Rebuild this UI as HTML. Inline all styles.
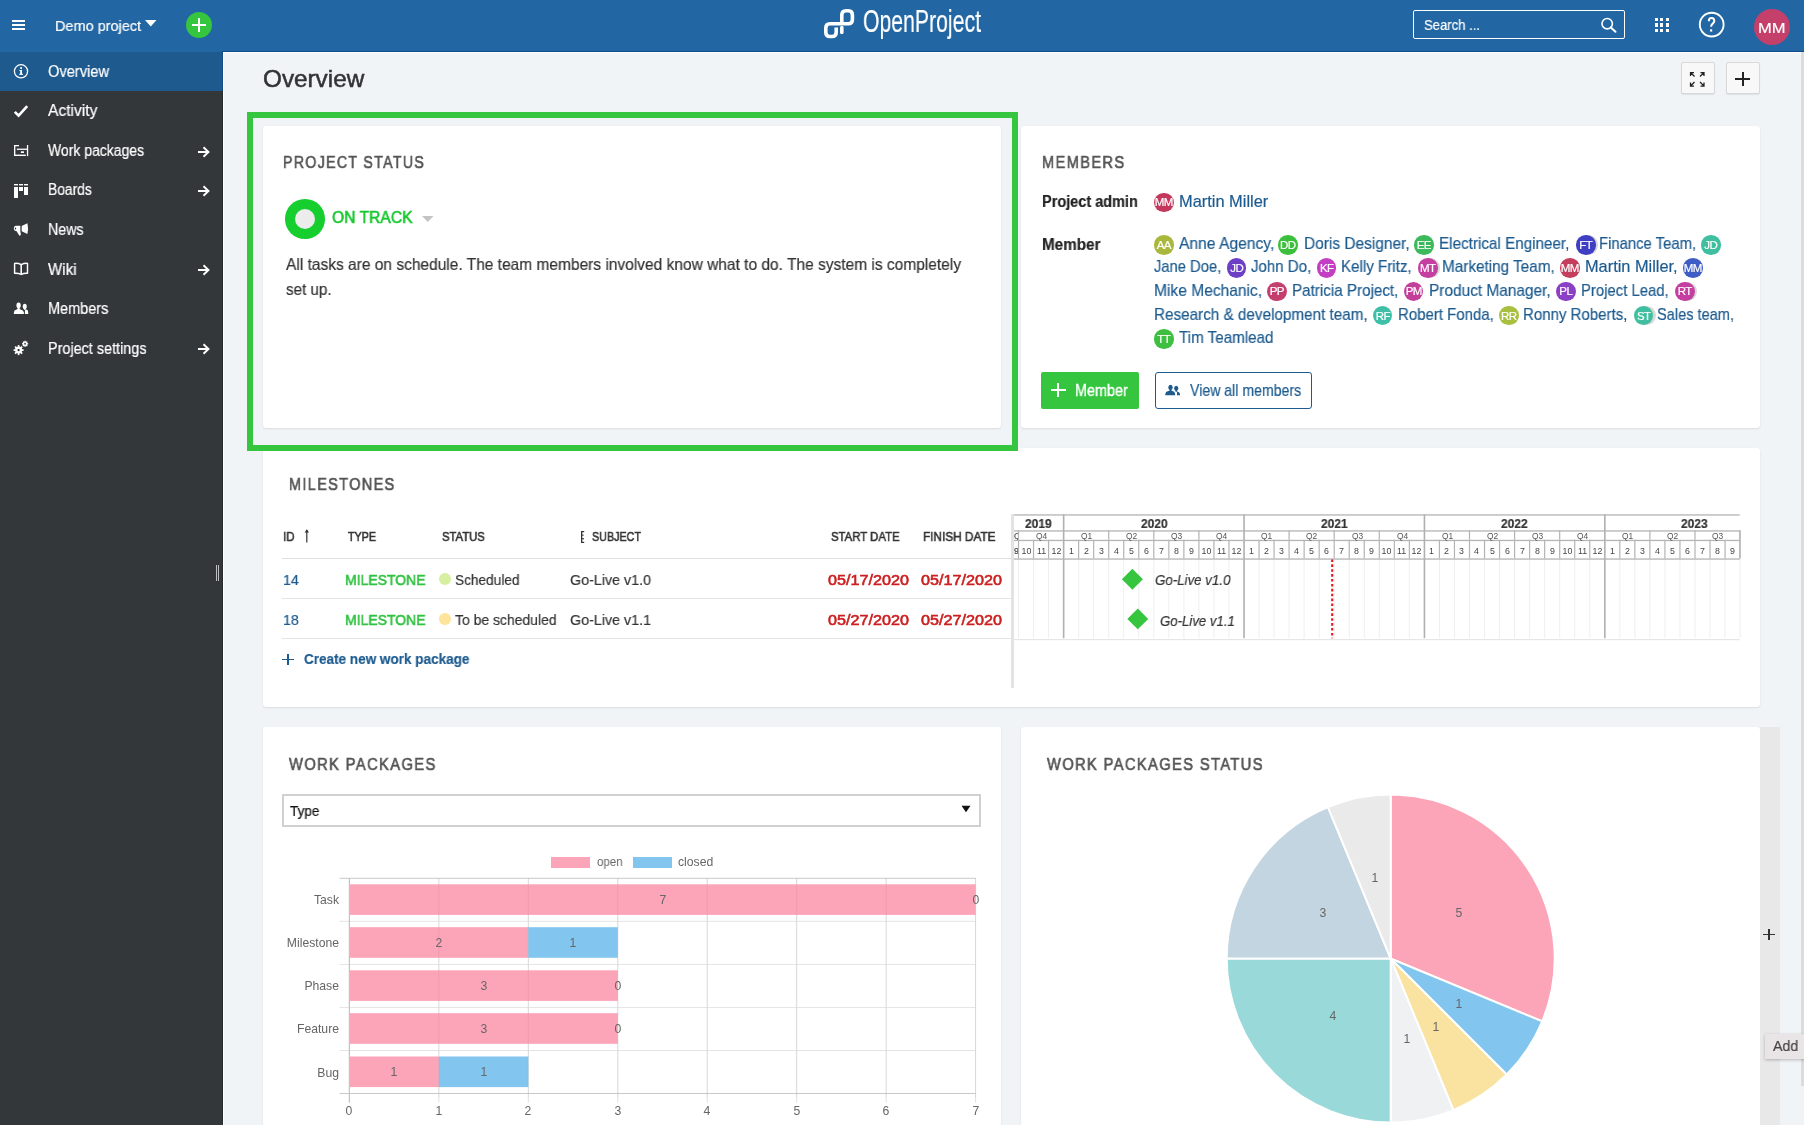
<!DOCTYPE html>
<html><head><meta charset="utf-8"><title>Overview</title>
<style>
*{box-sizing:border-box;margin:0;padding:0}
html,body{width:1804px;height:1125px;overflow:hidden;background:#f1f4f7;font-family:"Liberation Sans",sans-serif;color:#333}
.a{position:absolute}
.t{position:absolute;white-space:nowrap;line-height:1;transform-origin:0 50%;-webkit-text-stroke:0.2px currentColor}
.semi{-webkit-text-stroke:0.6px currentColor}
.t{will-change:transform}
.card{position:absolute;background:#fff;border-radius:3px;box-shadow:0 1px 2px rgba(0,0,0,.09),0 0 1px rgba(0,0,0,.06)}
svg{position:absolute;overflow:visible}
</style></head><body>

<div class="a" style="left:0px;top:0px;width:1804px;height:52px;background:#2267a3;"></div>
<div class="a" style="left:222px;top:51px;width:1582px;height:1px;background:#0f4c88;"></div>
<div class="a" style="left:12px;top:20px;width:12.5px;height:2px;background:#fff"></div>
<div class="a" style="left:12px;top:24px;width:12.5px;height:2px;background:#fff"></div>
<div class="a" style="left:12px;top:28px;width:12.5px;height:2px;background:#fff"></div>
<div class="t " style="left: 55.2px; top: 17.8px; font-size: 15px; color: rgb(255, 255, 255); transform: scaleX(0.9652);">Demo project</div>
<svg style="left:145px;top:20px" width="12" height="7"><path d="M0 0H11.5L5.75 6.5Z" fill="#fff"></path></svg>
<div class="a" style="left:186.00px;top:11.50px;width:26px;height:26px;border-radius:50%;background:#35c53f;"></div>
<div class="a" style="left:192px;top:23.5px;width:14px;height:2px;background:#fff;"></div>
<div class="a" style="left:198px;top:17.5px;width:2px;height:14px;background:#fff;"></div>
<svg style="left:818px;top:4px" width="44" height="40"><g fill="none" stroke="#fff" stroke-width="3.6"><path d="M23.8 21V11Q23.8 6.8 28 6.8H30.3Q34.4 6.8 34.4 11V15.8Q34.4 19.8 30.3 19.8H12Q7.8 19.8 7.8 24V28.2Q7.8 32.5 12 32.5H14Q18.2 32.5 18.2 28.2V23.4"></path><path d="M23.8 23.5V28.5" stroke-linecap="round"></path></g></svg>
<div class="t " style="left: 863px; top: 6.16px; font-size: 31px; color: rgb(255, 255, 255); transform: scaleX(0.6847);">OpenProject</div>
<div class="a" style="left:1412.5px;top:10px;width:212.5px;height:29px;border:1.4px solid #fff;border-radius:2px"></div>
<div class="t " style="left: 1424px; top: 16.88px; font-size: 15.5px; color: rgb(255, 255, 255); transform: scaleX(0.8441);">Search ...</div>
<svg style="left:1598px;top:15px" width="22" height="20"><circle cx="9.2" cy="8.7" r="5.2" fill="none" stroke="#fff" stroke-width="1.6"></circle><path d="M12.8 12.4L17.5 16.8" stroke="#fff" stroke-width="2" stroke-linecap="round"></path></svg>
<div class="a" style="left:1654.9px;top:18.0px;width:3.3px;height:3.3px;background:#fff;"></div>
<div class="a" style="left:1654.9px;top:23.3px;width:3.3px;height:3.3px;background:#fff;"></div>
<div class="a" style="left:1654.9px;top:28.6px;width:3.3px;height:3.3px;background:#fff;"></div>
<div class="a" style="left:1660.2px;top:18.0px;width:3.3px;height:3.3px;background:#fff;"></div>
<div class="a" style="left:1660.2px;top:23.3px;width:3.3px;height:3.3px;background:#fff;"></div>
<div class="a" style="left:1660.2px;top:28.6px;width:3.3px;height:3.3px;background:#fff;"></div>
<div class="a" style="left:1665.5px;top:18.0px;width:3.3px;height:3.3px;background:#fff;"></div>
<div class="a" style="left:1665.5px;top:23.3px;width:3.3px;height:3.3px;background:#fff;"></div>
<div class="a" style="left:1665.5px;top:28.6px;width:3.3px;height:3.3px;background:#fff;"></div>
<svg style="left:1698px;top:11px" width="28" height="28"><circle cx="13.7" cy="13.6" r="11.9" fill="none" stroke="#fff" stroke-width="1.9"></circle></svg>
<svg style="left:1698px;top:11px" width="28" height="28"><path d="M10.8 10.2Q10.8 6.9 13.6 6.9Q16.3 6.9 16.3 9.8Q16.3 11.4 14.7 12.6Q13.15 13.8 13.15 15.4V15.8" fill="none" stroke="#fff" stroke-width="2"></path><rect x="12.1" y="18.3" width="2.1" height="2.3" fill="#fff"></rect></svg>
<div class="a" style="left:1753.70px;top:8.80px;width:36px;height:36px;border-radius:50%;background:#c4406a;"></div>
<div class="t " style="left: 1758px; top: 19.76px; font-size: 15.4px; color: rgb(255, 255, 255); transform: scaleX(1.0719);">MM</div>
<div class="a" style="left:0px;top:52px;width:223px;height:1073px;background:#333739;"></div>
<div class="a" style="left:222px;top:52px;width:1px;height:1073px;background:#292c2e;"></div>
<div class="a" style="left:0px;top:52px;width:223px;height:39px;background:#1e5a8e;"></div>
<div class="a" style="left:222px;top:52px;width:1px;height:39px;background:#0f4c88;"></div>
<div class="t " style="left: 48.3px; top: 63.76px; font-size: 16px; color: rgb(255, 255, 255); transform: scaleX(0.9147);">Overview</div>
<div class="t " style="left: 48.3px; top: 103.26px; font-size: 16px; color: rgb(255, 255, 255); transform: scaleX(0.9729);">Activity</div>
<div class="t " style="left: 48.3px; top: 142.86px; font-size: 16px; color: rgb(255, 255, 255); transform: scaleX(0.8738);">Work packages</div>
<div class="t " style="left: 48.3px; top: 182.46px; font-size: 16px; color: rgb(255, 255, 255); transform: scaleX(0.8639);">Boards</div>
<div class="t " style="left: 48.3px; top: 221.96px; font-size: 16px; color: rgb(255, 255, 255); transform: scaleX(0.8872);">News</div>
<div class="t " style="left: 48.3px; top: 261.56px; font-size: 16px; color: rgb(255, 255, 255); transform: scaleX(0.9431);">Wiki</div>
<div class="t " style="left: 48.3px; top: 301.16px; font-size: 16px; color: rgb(255, 255, 255); transform: scaleX(0.9042);">Members</div>
<div class="t " style="left: 48.3px; top: 340.66px; font-size: 16px; color: rgb(255, 255, 255); transform: scaleX(0.9004);">Project settings</div>
<svg style="left:197px;top:145.8px" width="14" height="12"><path d="M1 6H11.5M6.5 1.2L11.5 6L6.5 10.8" fill="none" stroke="#fff" stroke-width="1.9"></path></svg>
<svg style="left:197px;top:184.9px" width="14" height="12"><path d="M1 6H11.5M6.5 1.2L11.5 6L6.5 10.8" fill="none" stroke="#fff" stroke-width="1.9"></path></svg>
<svg style="left:197px;top:263.8px" width="14" height="12"><path d="M1 6H11.5M6.5 1.2L11.5 6L6.5 10.8" fill="none" stroke="#fff" stroke-width="1.9"></path></svg>
<svg style="left:197px;top:342.8px" width="14" height="12"><path d="M1 6H11.5M6.5 1.2L11.5 6L6.5 10.8" fill="none" stroke="#fff" stroke-width="1.9"></path></svg>
<svg style="left:13px;top:63px" width="17" height="17"><circle cx="8" cy="8.3" r="6.6" fill="none" stroke="#fff" stroke-width="1.3"></circle><rect x="7.2" y="7" width="1.8" height="4.6" fill="#fff"></rect><rect x="6.2" y="10.8" width="3.8" height="1" fill="#fff"></rect><rect x="6.4" y="7" width="2" height="1" fill="#fff"></rect><circle cx="8.1" cy="5.1" r="1.05" fill="#fff"></circle></svg>
<svg style="left:13px;top:103px" width="17" height="17"><path d="M1.8 8.8L5.6 12.6L14.2 3.2" fill="none" stroke="#fff" stroke-width="2.6" stroke-linejoin="miter"></path></svg>
<svg style="left:13px;top:144px" width="17" height="14"><g fill="#fff"><rect x="1" y="1" width="1.35" height="11"></rect><rect x="1" y="1" width="5" height="1.3"></rect><rect x="1" y="10.6" width="11.8" height="1.4"></rect><rect x="13.9" y="1" width="1.3" height="11.1"></rect><rect x="3.8" y="4.6" width="10.3" height="1.3"></rect><rect x="7.8" y="7.2" width="3.2" height="1.8" rx="0.6"></rect></g></svg>
<svg style="left:13px;top:183px" width="17" height="17"><g fill="#fff"><rect x="1" y="1" width="4" height="1.4"></rect><rect x="6" y="1" width="4" height="1.4"></rect><rect x="11" y="1" width="4" height="1.4"></rect><rect x="1" y="4" width="4" height="11"></rect><rect x="6" y="4" width="4" height="4"></rect><rect x="11" y="4" width="4" height="8"></rect></g></svg>
<svg style="left:13px;top:222px" width="17" height="16"><g fill="#fff"><path d="M8.7 4L14.4 1.3Q15.7 6.65 14.4 12L8.7 9.3Z"></path><path d="M2.6 3.8H7.3V8.9H2.6Q0.9 8.9 0.9 6.35Q0.9 3.8 2.6 3.8Z"></path><path d="M3.4 8.9H7.3L7.9 12.5Q7.6 13.9 6.3 13.6Z"></path></g><ellipse cx="2.5" cy="6.6" rx="0.65" ry="1" fill="#333739"></ellipse></svg>
<svg style="left:13px;top:261px" width="17" height="16"><path d="M1.6 2.4Q5.2 2.1 8.2 3.6Q11.2 2.1 14.5 2.4V12.3Q11.2 12 8.2 13.4Q5.2 12 1.6 12.3Z" fill="none" stroke="#fff" stroke-width="1.45" stroke-linejoin="round"></path><path d="M8.2 3.6V13.6" stroke="#fff" stroke-width="1.6"></path></svg>
<svg style="left:13px;top:301px" width="17" height="15"><g fill="#fff"><ellipse cx="5.6" cy="4.4" rx="2.15" ry="2.8"></ellipse><rect x="4.6" y="6.4" width="2" height="2.2"></rect><path d="M0.9 13V11.3Q1 9.1 3.6 8.4L4.6 8.1H6.6L7.6 8.4Q10.4 9.1 10.9 11.3V13Z"></path><ellipse cx="11.75" cy="5.6" rx="2" ry="2.75"></ellipse><rect x="10.9" y="7.5" width="1.7" height="1.4"></rect><path d="M11.9 13V9.8Q12.1 8.8 12.9 8.6L13.3 8.5Q15.2 8.9 15.2 11V13Z"></path></g></svg>
<svg style="left:13px;top:337px" width="18" height="19"><g fill="#fff"><circle cx="5.6" cy="13.1" r="3.5"></circle><rect x="4.75" y="8.1" width="1.7" height="10" transform="rotate(0 5.6 13.1)"></rect><rect x="4.75" y="8.1" width="1.7" height="10" transform="rotate(45 5.6 13.1)"></rect><rect x="4.75" y="8.1" width="1.7" height="10" transform="rotate(90 5.6 13.1)"></rect><rect x="4.75" y="8.1" width="1.7" height="10" transform="rotate(135 5.6 13.1)"></rect><circle cx="12.1" cy="6.8" r="2.3"></circle><rect x="11.45" y="3.7" width="1.3" height="6.2" transform="rotate(0 12.1 6.8)"></rect><rect x="11.45" y="3.7" width="1.3" height="6.2" transform="rotate(45 12.1 6.8)"></rect><rect x="11.45" y="3.7" width="1.3" height="6.2" transform="rotate(90 12.1 6.8)"></rect><rect x="11.45" y="3.7" width="1.3" height="6.2" transform="rotate(135 12.1 6.8)"></rect></g><circle cx="5.6" cy="13.1" r="1.15" fill="#222"></circle><circle cx="12.1" cy="6.8" r="0.95" fill="#555"></circle></svg>
<div class="a" style="left:215.6px;top:565px;width:1.2px;height:16px;background:#bdbdbd;"></div>
<div class="a" style="left:217.8px;top:565px;width:1.2px;height:16px;background:#bdbdbd;"></div>
<div class="a" style="left:223px;top:52px;width:1px;height:1073px;background:#ffffff;"></div>
<div class="a" style="left:223px;top:52px;width:1578px;height:1px;background:#ffffff;"></div>
<div class="t " style="left: 263px; top: 68.02px; font-size: 23.6px; color: rgb(51, 51, 51); -webkit-text-stroke: 0.5px rgb(51, 51, 51); transform: scaleX(1.0292);">Overview</div>
<div class="a" style="left:1680.5px;top:62.3px;width:34px;height:32px;background:#f8f8f8;border:1px solid #d9d9d9;border-radius:2px;box-shadow:0 1px 1px rgba(0,0,0,.08)"></div>
<div class="a" style="left:1725.5px;top:62.3px;width:34px;height:32px;background:#f8f8f8;border:1px solid #d9d9d9;border-radius:2px;box-shadow:0 1px 1px rgba(0,0,0,.08)"></div>
<svg style="left:1689px;top:71px" width="17" height="17"><g fill="none" stroke="#222" stroke-width="1.25"><path d="M1.8 1.8L5.5 5.5M1.5 5V1.5H5"></path><path d="M14.7 1.8L11 5.5M11.5 1.5H15V5"></path><path d="M1.8 14.7L5.5 11M1.5 11.5V15H5"></path><path d="M14.7 14.7L11 11M15 11.5V15H11.5"></path></g></svg>
<div class="a" style="left:1735px;top:78px;width:15px;height:2.1px;background:#222;"></div>
<div class="a" style="left:1741.5px;top:71.7px;width:2.1px;height:14.3px;background:#222;"></div>
<div class="card" style="left:263px;top:126px;width:738px;height:302px"></div>
<div class="card" style="left:1021px;top:126px;width:739px;height:302px"></div>
<div class="card" style="left:263px;top:448px;width:1497px;height:259px"></div>
<div class="card" style="left:263px;top:727px;width:738px;height:420px"></div>
<div class="card" style="left:1021px;top:727px;width:739px;height:420px"></div>
<div class="a" style="left:1760px;top:727px;width:19.5px;height:398px;background:#e8e8e8;"></div>
<div class="a" style="left:1801px;top:52px;width:3px;height:1034px;background:#dcdcdc;"></div>
<div class="t " style="left: 282.8px; top: 153.91px; font-size: 17px; color: rgb(85, 85, 85); letter-spacing: 1.6px; -webkit-text-stroke: 0.65px rgb(85, 85, 85); transform: scaleX(0.8324);">PROJECT STATUS</div>
<div class="a" style="left:285.45px;top:199.25px;width:39.5px;height:39.5px;border-radius:50%;background:#16cf2e;"></div>
<div class="a" style="left:295.20px;top:209.00px;width:20px;height:20px;border-radius:50%;background:#ececec;"></div>
<div class="t semi" style="left: 332px; top: 208.81px; font-size: 17px; color: rgb(22, 201, 46); transform: scaleX(0.9195);">ON TRACK</div>
<svg style="left:422px;top:216px" width="12" height="7"><path d="M0 0H11.5L5.75 6Z" fill="#c4c4c4"></path></svg>
<div class="t " style="left: 286px; top: 256.33px; font-size: 16.5px; color: rgb(51, 51, 51); transform: scaleX(0.9396);">All tasks are on schedule. The team members involved know what to do. The system is completely</div>
<div class="t " style="left: 286px; top: 281.23px; font-size: 16.5px; color: rgb(51, 51, 51); transform: scaleX(0.9203);">set up.</div>
<div class="t " style="left: 1041.5px; top: 153.71px; font-size: 17px; color: rgb(85, 85, 85); letter-spacing: 1.6px; -webkit-text-stroke: 0.65px rgb(85, 85, 85); transform: scaleX(0.8594);">MEMBERS</div>
<div class="t " style="left: 1041.5px; top: 194.16px; font-size: 16px; color: rgb(34, 34, 34); font-weight: 700; transform: scaleX(0.9063);">Project admin</div>
<div class="t " style="left: 1041.5px; top: 236.76px; font-size: 16px; color: rgb(34, 34, 34); font-weight: 700; transform: scaleX(0.9518);">Member</div>
<div class="a" style="left:1154.00px;top:192.70px;width:19.6px;height:19.6px;border-radius:50%;background:#c4385e;"></div>
<div class="t" style="left:1154.00px;top:197.35px;width:19.6px;text-align:center;font-size:11.5px;color:#fff;letter-spacing:-0.6px;transform:none">MM</div>
<div class="t " style="left: 1179.2px; top: 192.89px; font-size: 16.2px; color: rgb(29, 91, 143); transform: scaleX(1.0132);">Martin Miller</div>
<div class="a" style="left:1154.20px;top:235.20px;width:19.6px;height:19.6px;border-radius:50%;background:#a9b83c;"></div>
<div class="t" style="left:1154.20px;top:239.85px;width:19.6px;text-align:center;font-size:11.5px;color:#fff;letter-spacing:-0.6px;transform:none">AA</div>
<div class="t " style="left: 1178.6px; top: 235.09px; font-size: 16.2px; color: rgb(29, 91, 143); transform: scaleX(0.9655);">Anne Agency,</div>
<div class="a" style="left:1278.00px;top:235.20px;width:19.6px;height:19.6px;border-radius:50%;background:#3cbf3c;"></div>
<div class="t" style="left:1278.00px;top:239.85px;width:19.6px;text-align:center;font-size:11.5px;color:#fff;letter-spacing:-0.6px;transform:none">DD</div>
<div class="t " style="left: 1303.8px; top: 235.09px; font-size: 16.2px; color: rgb(29, 91, 143); transform: scaleX(0.9543);">Doris Designer,</div>
<div class="a" style="left:1414.00px;top:235.20px;width:19.6px;height:19.6px;border-radius:50%;background:#3cb95b;"></div>
<div class="t" style="left:1414.00px;top:239.85px;width:19.6px;text-align:center;font-size:11.5px;color:#fff;letter-spacing:-0.6px;transform:none">EE</div>
<div class="t " style="left: 1439.2px; top: 235.09px; font-size: 16.2px; color: rgb(29, 91, 143); transform: scaleX(0.941);">Electrical Engineer,</div>
<div class="a" style="left:1578.40px;top:235.20px;width:19.6px;height:19.6px;border-radius:50%;background:#d8d8d8"></div>
<div class="a" style="left:1576.00px;top:235.20px;width:19.6px;height:19.6px;border-radius:50%;background:#3f3fc4;"></div>
<div class="t" style="left:1576.00px;top:239.85px;width:19.6px;text-align:center;font-size:11.5px;color:#fff;letter-spacing:-0.6px;transform:none">FT</div>
<div class="t " style="left: 1599px; top: 235.09px; font-size: 16.2px; color: rgb(29, 91, 143); transform: scaleX(0.9162);">Finance Team,</div>
<div class="a" style="left:1701.30px;top:235.20px;width:19.6px;height:19.6px;border-radius:50%;background:#3fbf9f;"></div>
<div class="t" style="left:1701.30px;top:239.85px;width:19.6px;text-align:center;font-size:11.5px;color:#fff;letter-spacing:-0.6px;transform:none">JD</div>
<div class="t " style="left: 1154.2px; top: 258.29px; font-size: 16.2px; color: rgb(29, 91, 143); transform: scaleX(0.912);">Jane Doe,</div>
<div class="a" style="left:1226.50px;top:258.40px;width:19.6px;height:19.6px;border-radius:50%;background:#6c3fc4;"></div>
<div class="t" style="left:1226.50px;top:263.05px;width:19.6px;text-align:center;font-size:11.5px;color:#fff;letter-spacing:-0.6px;transform:none">JD</div>
<div class="t " style="left: 1251px; top: 258.29px; font-size: 16.2px; color: rgb(29, 91, 143); transform: scaleX(0.9306);">John Do,</div>
<div class="a" style="left:1316.80px;top:258.40px;width:19.6px;height:19.6px;border-radius:50%;background:#c23fc4;"></div>
<div class="t" style="left:1316.80px;top:263.05px;width:19.6px;text-align:center;font-size:11.5px;color:#fff;letter-spacing:-0.6px;transform:none">KF</div>
<div class="t " style="left: 1341.3px; top: 258.29px; font-size: 16.2px; color: rgb(29, 91, 143); transform: scaleX(0.9356);">Kelly Fritz,</div>
<div class="a" style="left:1420.40px;top:258.40px;width:19.6px;height:19.6px;border-radius:50%;background:#d8d8d8"></div>
<div class="a" style="left:1418.00px;top:258.40px;width:19.6px;height:19.6px;border-radius:50%;background:#c43f9f;"></div>
<div class="t" style="left:1418.00px;top:263.05px;width:19.6px;text-align:center;font-size:11.5px;color:#fff;letter-spacing:-0.6px;transform:none">MT</div>
<div class="t " style="left: 1442px; top: 258.29px; font-size: 16.2px; color: rgb(29, 91, 143); transform: scaleX(0.945);">Marketing Team,</div>
<div class="a" style="left:1560.00px;top:258.40px;width:19.6px;height:19.6px;border-radius:50%;background:#c43f5e;"></div>
<div class="t" style="left:1560.00px;top:263.05px;width:19.6px;text-align:center;font-size:11.5px;color:#fff;letter-spacing:-0.6px;transform:none">MM</div>
<div class="t " style="left: 1585.4px; top: 258.29px; font-size: 16.2px; color: rgb(29, 91, 143); transform: scaleX(1.0093);">Martin Miller,</div>
<div class="a" style="left:1683.30px;top:258.40px;width:19.6px;height:19.6px;border-radius:50%;background:#3f5ec4;"></div>
<div class="t" style="left:1683.30px;top:263.05px;width:19.6px;text-align:center;font-size:11.5px;color:#fff;letter-spacing:-0.6px;transform:none">MM</div>
<div class="t " style="left: 1154.2px; top: 281.69px; font-size: 16.2px; color: rgb(29, 91, 143); transform: scaleX(0.9613);">Mike Mechanic,</div>
<div class="a" style="left:1267.00px;top:281.80px;width:19.6px;height:19.6px;border-radius:50%;background:#c43f6e;"></div>
<div class="t" style="left:1267.00px;top:286.45px;width:19.6px;text-align:center;font-size:11.5px;color:#fff;letter-spacing:-0.6px;transform:none">PP</div>
<div class="t " style="left: 1292.2px; top: 281.69px; font-size: 16.2px; color: rgb(29, 91, 143); transform: scaleX(0.9386);">Patricia Project,</div>
<div class="a" style="left:1403.60px;top:281.80px;width:19.6px;height:19.6px;border-radius:50%;background:#c43f9a;"></div>
<div class="t" style="left:1403.60px;top:286.45px;width:19.6px;text-align:center;font-size:11.5px;color:#fff;letter-spacing:-0.6px;transform:none">PM</div>
<div class="t " style="left: 1428.9px; top: 281.69px; font-size: 16.2px; color: rgb(29, 91, 143); transform: scaleX(0.9524);">Product Manager,</div>
<div class="a" style="left:1556.00px;top:281.80px;width:19.6px;height:19.6px;border-radius:50%;background:#8a3fc4;"></div>
<div class="t" style="left:1556.00px;top:286.45px;width:19.6px;text-align:center;font-size:11.5px;color:#fff;letter-spacing:-0.6px;transform:none">PL</div>
<div class="t " style="left: 1581px; top: 281.69px; font-size: 16.2px; color: rgb(29, 91, 143); transform: scaleX(0.9183);">Project Lead,</div>
<div class="a" style="left:1677.40px;top:281.80px;width:19.6px;height:19.6px;border-radius:50%;background:#d8d8d8"></div>
<div class="a" style="left:1675.00px;top:281.80px;width:19.6px;height:19.6px;border-radius:50%;background:#c43f9f;"></div>
<div class="t" style="left:1675.00px;top:286.45px;width:19.6px;text-align:center;font-size:11.5px;color:#fff;letter-spacing:-0.6px;transform:none">RT</div>
<div class="t " style="left: 1154.2px; top: 305.79px; font-size: 16.2px; color: rgb(29, 91, 143); transform: scaleX(0.9424);">Research &amp; development team,</div>
<div class="a" style="left:1372.50px;top:305.90px;width:19.6px;height:19.6px;border-radius:50%;background:#3fbfa7;"></div>
<div class="t" style="left:1372.50px;top:310.55px;width:19.6px;text-align:center;font-size:11.5px;color:#fff;letter-spacing:-0.6px;transform:none">RF</div>
<div class="t " style="left: 1398px; top: 305.79px; font-size: 16.2px; color: rgb(29, 91, 143); transform: scaleX(0.9257);">Robert Fonda,</div>
<div class="a" style="left:1499.00px;top:305.90px;width:19.6px;height:19.6px;border-radius:50%;background:#a9bf3f;"></div>
<div class="t" style="left:1499.00px;top:310.55px;width:19.6px;text-align:center;font-size:11.5px;color:#fff;letter-spacing:-0.6px;transform:none">RR</div>
<div class="t " style="left: 1523.2px; top: 305.79px; font-size: 16.2px; color: rgb(29, 91, 143); transform: scaleX(0.9274);">Ronny Roberts,</div>
<div class="a" style="left:1636.20px;top:305.90px;width:19.6px;height:19.6px;border-radius:50%;background:#d8d8d8"></div>
<div class="a" style="left:1633.80px;top:305.90px;width:19.6px;height:19.6px;border-radius:50%;background:#3fbf9f;"></div>
<div class="t" style="left:1633.80px;top:310.55px;width:19.6px;text-align:center;font-size:11.5px;color:#fff;letter-spacing:-0.6px;transform:none">ST</div>
<div class="t " style="left: 1657px; top: 305.79px; font-size: 16.2px; color: rgb(29, 91, 143); transform: scaleX(0.9007);">Sales team,</div>
<div class="a" style="left:1154.20px;top:329.10px;width:19.6px;height:19.6px;border-radius:50%;background:#3fbf3f;"></div>
<div class="t" style="left:1154.20px;top:333.75px;width:19.6px;text-align:center;font-size:11.5px;color:#fff;letter-spacing:-0.6px;transform:none">TT</div>
<div class="t " style="left: 1178.6px; top: 328.99px; font-size: 16.2px; color: rgb(29, 91, 143); transform: scaleX(0.9368);">Tim Teamlead</div>
<div class="a" style="left:1041.3px;top:372px;width:98px;height:36.5px;background:#35c53f;border-radius:2px"></div>
<div class="a" style="left:1050.8px;top:389.4px;width:15px;height:1.8px;background:#fff;"></div>
<div class="a" style="left:1057.4px;top:383.3px;width:1.8px;height:14.1px;background:#fff;"></div>
<div class="t " style="left: 1075.2px; top: 382.51px; font-size: 15.7px; color: rgb(255, 255, 255); -webkit-text-stroke: 0.35px rgb(255, 255, 255); transform: scaleX(0.9193);">Member</div>
<div class="a" style="left:1155px;top:372px;width:157px;height:36.5px;border:1.6px solid #1d5b8f;border-radius:3px;background:#fff"></div>
<svg style="left:1164px;top:383px" width="17" height="14"><g fill="#1d5b8f"><ellipse cx="6.5" cy="4.4" rx="2.2" ry="2.6"></ellipse><rect x="5.5" y="6.3" width="2" height="2.1"></rect><path d="M1.3 12.3V10.9Q1.5 8.6 4.2 8.1L5.5 7.8H7.5L8.8 8.1Q10.8 8.6 11.1 10.9V12.3Z"></path><ellipse cx="12.2" cy="5.2" rx="2.1" ry="2.5"></ellipse><rect x="11.4" y="7" width="1.6" height="1.7"></rect><path d="M13 12.3V9.7Q13 8.9 12.4 8.5L13.4 8.4Q15.8 8.9 16 10.9V12.3Z"></path></g></svg>
<div class="t " style="left: 1190px; top: 382.51px; font-size: 15.7px; color: rgb(29, 91, 143); transform: scaleX(0.8995);">View all members</div>
<div class="t " style="left: 289px; top: 476.31px; font-size: 17px; color: rgb(85, 85, 85); letter-spacing: 1.6px; -webkit-text-stroke: 0.65px rgb(85, 85, 85); transform: scaleX(0.8509);">MILESTONES</div>
<div class="t semi" style="left: 282.6px; top: 529.79px; font-size: 13.6px; color: rgb(51, 51, 51); transform: scaleX(0.8533);">ID</div>
<svg style="left:303px;top:528px" width="8" height="16"><path d="M3.8 2V14.5" stroke="#333" stroke-width="1.2"></path><path d="M1.6 4.6L3.8 1.2L6 4.6Z" fill="#333"></path></svg>
<div class="t semi" style="left: 348.4px; top: 529.79px; font-size: 13.6px; color: rgb(51, 51, 51); transform: scaleX(0.7884);">TYPE</div>
<div class="t semi" style="left: 441.7px; top: 529.79px; font-size: 13.6px; color: rgb(51, 51, 51); transform: scaleX(0.8293);">STATUS</div>
<svg style="left:580px;top:530px" width="8" height="14"><g fill="#333"><rect x="1" y="1" width="1.3" height="12"></rect><rect x="1" y="1" width="3.2" height="1.2"></rect><rect x="1" y="4.6" width="2.6" height="1.1"></rect><rect x="1" y="8.2" width="3" height="1.1"></rect><rect x="1" y="11.8" width="3.2" height="1.2"></rect></g></svg>
<div class="t semi" style="left: 591.9px; top: 529.79px; font-size: 13.6px; color: rgb(51, 51, 51); transform: scaleX(0.7895);">SUBJECT</div>
<div class="t semi" style="left: 830.8px; top: 529.79px; font-size: 13.6px; color: rgb(51, 51, 51); transform: scaleX(0.8356);">START DATE</div>
<div class="t semi" style="left: 923.4px; top: 529.79px; font-size: 13.6px; color: rgb(51, 51, 51); transform: scaleX(0.8673);">FINISH DATE</div>
<div class="a" style="left:282px;top:557.8px;width:730px;height:1.2px;background:#e0e0e0;"></div>
<div class="a" style="left:282px;top:597.8px;width:730px;height:1.2px;background:#e4e4e4;"></div>
<div class="a" style="left:282px;top:637.9px;width:730px;height:1.2px;background:#e4e4e4;"></div>
<div class="t " style="left: 282.6px; top: 572.05px; font-size: 15.3px; color: rgb(29, 91, 143); transform: scaleX(0.9286);">14</div>
<div class="t semi" style="left: 345.4px; top: 572.05px; font-size: 15.3px; color: rgb(48, 193, 64); transform: scaleX(0.9135);">MILESTONE</div>
<div class="a" style="left:439.00px;top:573.30px;width:12px;height:12px;border-radius:50%;background:#d6efa0;"></div>
<div class="t " style="left: 455px; top: 572.05px; font-size: 15.3px; color: rgb(51, 51, 51); transform: scaleX(0.8935);">Scheduled</div>
<div class="t " style="left: 569.6px; top: 572.05px; font-size: 15.3px; color: rgb(51, 51, 51); transform: scaleX(0.9339);">Go-Live v1.0</div>
<div class="t semi" style="left: 827.8px; top: 572.05px; font-size: 15.3px; color: rgb(204, 32, 32); transform: scaleX(1.0567);">05/17/2020</div>
<div class="t semi" style="left: 920.5px; top: 572.05px; font-size: 15.3px; color: rgb(204, 32, 32); transform: scaleX(1.0567);">05/17/2020</div>
<div class="t " style="left: 282.6px; top: 612.05px; font-size: 15.3px; color: rgb(29, 91, 143); transform: scaleX(0.9286);">18</div>
<div class="t semi" style="left: 345.4px; top: 612.05px; font-size: 15.3px; color: rgb(48, 193, 64); transform: scaleX(0.9135);">MILESTONE</div>
<div class="a" style="left:439.00px;top:613.30px;width:12px;height:12px;border-radius:50%;background:#fde49a;"></div>
<div class="t " style="left: 455px; top: 612.05px; font-size: 15.3px; color: rgb(51, 51, 51); transform: scaleX(0.911);">To be scheduled</div>
<div class="t " style="left: 569.6px; top: 612.05px; font-size: 15.3px; color: rgb(51, 51, 51); transform: scaleX(0.9339);">Go-Live v1.1</div>
<div class="t semi" style="left: 827.8px; top: 612.05px; font-size: 15.3px; color: rgb(204, 32, 32); transform: scaleX(1.0567);">05/27/2020</div>
<div class="t semi" style="left: 920.5px; top: 612.05px; font-size: 15.3px; color: rgb(204, 32, 32); transform: scaleX(1.0567);">05/27/2020</div>
<div class="a" style="left:282.2px;top:658.7px;width:11.6px;height:1.5px;background:#1d5b8f;"></div>
<div class="a" style="left:287.3px;top:653.6px;width:1.5px;height:11.6px;background:#1d5b8f;"></div>
<div class="t " style="left: 304.3px; top: 651.25px; font-size: 15.3px; color: rgb(29, 91, 143); font-weight: 700; transform: scaleX(0.8843);">Create new work package</div>
<div class="a" style="left:1011.3px;top:514px;width:2.7px;height:174px;background:#e3e3e3;"></div>
<svg style="left:0;top:0" width="1804" height="1125"><rect x="1018.00" y="558.4" width="1" height="79.8" fill="#efefef"></rect><rect x="1017.90" y="539.8" width="1.2" height="18.6" fill="#b4b4b4"></rect><rect x="1017.90" y="530.3" width="1.2" height="9.5" fill="#b4b4b4"></rect><rect x="1033.03" y="558.4" width="1" height="79.8" fill="#efefef"></rect><rect x="1032.93" y="539.8" width="1.2" height="18.6" fill="#b4b4b4"></rect><rect x="1048.07" y="558.4" width="1" height="79.8" fill="#efefef"></rect><rect x="1047.97" y="539.8" width="1.2" height="18.6" fill="#b4b4b4"></rect><rect x="1062.85" y="514.3" width="1.6" height="123.9" fill="#b0b0b0"></rect><rect x="1078.13" y="558.4" width="1" height="79.8" fill="#efefef"></rect><rect x="1078.03" y="539.8" width="1.2" height="18.6" fill="#b4b4b4"></rect><rect x="1093.17" y="558.4" width="1" height="79.8" fill="#efefef"></rect><rect x="1093.07" y="539.8" width="1.2" height="18.6" fill="#b4b4b4"></rect><rect x="1108.20" y="558.4" width="1" height="79.8" fill="#efefef"></rect><rect x="1108.10" y="539.8" width="1.2" height="18.6" fill="#b4b4b4"></rect><rect x="1108.10" y="530.3" width="1.2" height="9.5" fill="#b4b4b4"></rect><rect x="1123.23" y="558.4" width="1" height="79.8" fill="#efefef"></rect><rect x="1123.13" y="539.8" width="1.2" height="18.6" fill="#b4b4b4"></rect><rect x="1138.26" y="558.4" width="1" height="79.8" fill="#efefef"></rect><rect x="1138.16" y="539.8" width="1.2" height="18.6" fill="#b4b4b4"></rect><rect x="1153.30" y="558.4" width="1" height="79.8" fill="#efefef"></rect><rect x="1153.20" y="539.8" width="1.2" height="18.6" fill="#b4b4b4"></rect><rect x="1153.20" y="530.3" width="1.2" height="9.5" fill="#b4b4b4"></rect><rect x="1168.33" y="558.4" width="1" height="79.8" fill="#efefef"></rect><rect x="1168.23" y="539.8" width="1.2" height="18.6" fill="#b4b4b4"></rect><rect x="1183.36" y="558.4" width="1" height="79.8" fill="#efefef"></rect><rect x="1183.26" y="539.8" width="1.2" height="18.6" fill="#b4b4b4"></rect><rect x="1198.40" y="558.4" width="1" height="79.8" fill="#efefef"></rect><rect x="1198.30" y="539.8" width="1.2" height="18.6" fill="#b4b4b4"></rect><rect x="1198.30" y="530.3" width="1.2" height="9.5" fill="#b4b4b4"></rect><rect x="1213.43" y="558.4" width="1" height="79.8" fill="#efefef"></rect><rect x="1213.33" y="539.8" width="1.2" height="18.6" fill="#b4b4b4"></rect><rect x="1228.46" y="558.4" width="1" height="79.8" fill="#efefef"></rect><rect x="1228.36" y="539.8" width="1.2" height="18.6" fill="#b4b4b4"></rect><rect x="1243.25" y="514.3" width="1.6" height="123.9" fill="#b0b0b0"></rect><rect x="1258.53" y="558.4" width="1" height="79.8" fill="#efefef"></rect><rect x="1258.43" y="539.8" width="1.2" height="18.6" fill="#b4b4b4"></rect><rect x="1273.56" y="558.4" width="1" height="79.8" fill="#efefef"></rect><rect x="1273.46" y="539.8" width="1.2" height="18.6" fill="#b4b4b4"></rect><rect x="1288.59" y="558.4" width="1" height="79.8" fill="#efefef"></rect><rect x="1288.49" y="539.8" width="1.2" height="18.6" fill="#b4b4b4"></rect><rect x="1288.49" y="530.3" width="1.2" height="9.5" fill="#b4b4b4"></rect><rect x="1303.63" y="558.4" width="1" height="79.8" fill="#efefef"></rect><rect x="1303.53" y="539.8" width="1.2" height="18.6" fill="#b4b4b4"></rect><rect x="1318.66" y="558.4" width="1" height="79.8" fill="#efefef"></rect><rect x="1318.56" y="539.8" width="1.2" height="18.6" fill="#b4b4b4"></rect><rect x="1333.69" y="558.4" width="1" height="79.8" fill="#efefef"></rect><rect x="1333.59" y="539.8" width="1.2" height="18.6" fill="#b4b4b4"></rect><rect x="1333.59" y="530.3" width="1.2" height="9.5" fill="#b4b4b4"></rect><rect x="1348.73" y="558.4" width="1" height="79.8" fill="#efefef"></rect><rect x="1348.63" y="539.8" width="1.2" height="18.6" fill="#b4b4b4"></rect><rect x="1363.76" y="558.4" width="1" height="79.8" fill="#efefef"></rect><rect x="1363.66" y="539.8" width="1.2" height="18.6" fill="#b4b4b4"></rect><rect x="1378.79" y="558.4" width="1" height="79.8" fill="#efefef"></rect><rect x="1378.69" y="539.8" width="1.2" height="18.6" fill="#b4b4b4"></rect><rect x="1378.69" y="530.3" width="1.2" height="9.5" fill="#b4b4b4"></rect><rect x="1393.83" y="558.4" width="1" height="79.8" fill="#efefef"></rect><rect x="1393.73" y="539.8" width="1.2" height="18.6" fill="#b4b4b4"></rect><rect x="1408.86" y="558.4" width="1" height="79.8" fill="#efefef"></rect><rect x="1408.76" y="539.8" width="1.2" height="18.6" fill="#b4b4b4"></rect><rect x="1423.64" y="514.3" width="1.6" height="123.9" fill="#b0b0b0"></rect><rect x="1438.92" y="558.4" width="1" height="79.8" fill="#efefef"></rect><rect x="1438.83" y="539.8" width="1.2" height="18.6" fill="#b4b4b4"></rect><rect x="1453.96" y="558.4" width="1" height="79.8" fill="#efefef"></rect><rect x="1453.86" y="539.8" width="1.2" height="18.6" fill="#b4b4b4"></rect><rect x="1468.99" y="558.4" width="1" height="79.8" fill="#efefef"></rect><rect x="1468.89" y="539.8" width="1.2" height="18.6" fill="#b4b4b4"></rect><rect x="1468.89" y="530.3" width="1.2" height="9.5" fill="#b4b4b4"></rect><rect x="1484.02" y="558.4" width="1" height="79.8" fill="#efefef"></rect><rect x="1483.92" y="539.8" width="1.2" height="18.6" fill="#b4b4b4"></rect><rect x="1499.06" y="558.4" width="1" height="79.8" fill="#efefef"></rect><rect x="1498.96" y="539.8" width="1.2" height="18.6" fill="#b4b4b4"></rect><rect x="1514.09" y="558.4" width="1" height="79.8" fill="#efefef"></rect><rect x="1513.99" y="539.8" width="1.2" height="18.6" fill="#b4b4b4"></rect><rect x="1513.99" y="530.3" width="1.2" height="9.5" fill="#b4b4b4"></rect><rect x="1529.12" y="558.4" width="1" height="79.8" fill="#efefef"></rect><rect x="1529.02" y="539.8" width="1.2" height="18.6" fill="#b4b4b4"></rect><rect x="1544.16" y="558.4" width="1" height="79.8" fill="#efefef"></rect><rect x="1544.06" y="539.8" width="1.2" height="18.6" fill="#b4b4b4"></rect><rect x="1559.19" y="558.4" width="1" height="79.8" fill="#efefef"></rect><rect x="1559.09" y="539.8" width="1.2" height="18.6" fill="#b4b4b4"></rect><rect x="1559.09" y="530.3" width="1.2" height="9.5" fill="#b4b4b4"></rect><rect x="1574.22" y="558.4" width="1" height="79.8" fill="#efefef"></rect><rect x="1574.12" y="539.8" width="1.2" height="18.6" fill="#b4b4b4"></rect><rect x="1589.25" y="558.4" width="1" height="79.8" fill="#efefef"></rect><rect x="1589.15" y="539.8" width="1.2" height="18.6" fill="#b4b4b4"></rect><rect x="1604.04" y="514.3" width="1.6" height="123.9" fill="#b0b0b0"></rect><rect x="1619.32" y="558.4" width="1" height="79.8" fill="#efefef"></rect><rect x="1619.22" y="539.8" width="1.2" height="18.6" fill="#b4b4b4"></rect><rect x="1634.35" y="558.4" width="1" height="79.8" fill="#efefef"></rect><rect x="1634.25" y="539.8" width="1.2" height="18.6" fill="#b4b4b4"></rect><rect x="1649.39" y="558.4" width="1" height="79.8" fill="#efefef"></rect><rect x="1649.29" y="539.8" width="1.2" height="18.6" fill="#b4b4b4"></rect><rect x="1649.29" y="530.3" width="1.2" height="9.5" fill="#b4b4b4"></rect><rect x="1664.42" y="558.4" width="1" height="79.8" fill="#efefef"></rect><rect x="1664.32" y="539.8" width="1.2" height="18.6" fill="#b4b4b4"></rect><rect x="1679.45" y="558.4" width="1" height="79.8" fill="#efefef"></rect><rect x="1679.35" y="539.8" width="1.2" height="18.6" fill="#b4b4b4"></rect><rect x="1694.49" y="558.4" width="1" height="79.8" fill="#efefef"></rect><rect x="1694.39" y="539.8" width="1.2" height="18.6" fill="#b4b4b4"></rect><rect x="1694.39" y="530.3" width="1.2" height="9.5" fill="#b4b4b4"></rect><rect x="1709.52" y="558.4" width="1" height="79.8" fill="#efefef"></rect><rect x="1709.42" y="539.8" width="1.2" height="18.6" fill="#b4b4b4"></rect><rect x="1724.55" y="558.4" width="1" height="79.8" fill="#efefef"></rect><rect x="1724.45" y="539.8" width="1.2" height="18.6" fill="#b4b4b4"></rect><rect x="1739.59" y="558.4" width="1" height="79.8" fill="#efefef"></rect><rect x="1739.49" y="539.8" width="1.2" height="18.6" fill="#b4b4b4"></rect><rect x="1739.49" y="530.3" width="1.2" height="9.5" fill="#b4b4b4"></rect><rect x="1014.0" y="514.3" width="725.8" height="1.3" fill="#b4b4b4"></rect><rect x="1014.0" y="530.3" width="725.8" height="1.3" fill="#b4b4b4"></rect><rect x="1014.0" y="539.8" width="725.8" height="1.3" fill="#b4b4b4"></rect><rect x="1014.0" y="558.4" width="725.8" height="1.3" fill="#b4b4b4"></rect><rect x="1739.2" y="530.3" width="1.2" height="28.1" fill="#b4b4b4"></rect><rect x="1014.0" y="639.0" width="725.8" height="1.2" fill="#e6e6e6"></rect><line x1="1332.2" y1="559.4" x2="1332.2" y2="638.2" stroke="#e8161a" stroke-width="2.1" stroke-dasharray="2.6 2.3"></line><rect x="1125.0" y="571.8" width="14.8" height="14.8" fill="#35c53f" transform="rotate(45 1132.4 579.2)"></rect><rect x="1130.4" y="611.5" width="14.8" height="14.8" fill="#35c53f" transform="rotate(45 1137.8 618.9)"></rect></svg>
<div class="t " style="left: 1025.4px; top: 516.5px; font-size: 13px; color: rgb(51, 51, 51); font-weight: 700; transform: scaleX(0.9197);">2019</div>
<div class="t " style="left: 1140.7px; top: 516.5px; font-size: 13px; color: rgb(51, 51, 51); font-weight: 700; transform: scaleX(0.9197);">2020</div>
<div class="t " style="left: 1320.7px; top: 516.5px; font-size: 13px; color: rgb(51, 51, 51); font-weight: 700; transform: scaleX(0.9197);">2021</div>
<div class="t " style="left: 1501.2px; top: 516.5px; font-size: 13px; color: rgb(51, 51, 51); font-weight: 700; transform: scaleX(0.9197);">2022</div>
<div class="t " style="left: 1681.2px; top: 516.5px; font-size: 13px; color: rgb(51, 51, 51); font-weight: 700; transform: scaleX(0.9197);">2023</div>
<div class="a" style="left:1014.0px;top:530px;width:3.5px;height:10px;overflow:hidden"><div class="t" style="left:0px;top:2.29px;font-size:8.4px;color:#555">Q3</div></div>
<div class="t " style="left:1035.90px;top:532.29px;font-size:8.4px;color:#555;-webkit-text-stroke:0">Q4</div>
<div class="t " style="left:1081.00px;top:532.29px;font-size:8.4px;color:#555;-webkit-text-stroke:0">Q1</div>
<div class="t " style="left:1126.10px;top:532.29px;font-size:8.4px;color:#555;-webkit-text-stroke:0">Q2</div>
<div class="t " style="left:1171.20px;top:532.29px;font-size:8.4px;color:#555;-webkit-text-stroke:0">Q3</div>
<div class="t " style="left:1216.30px;top:532.29px;font-size:8.4px;color:#555;-webkit-text-stroke:0">Q4</div>
<div class="t " style="left:1261.40px;top:532.29px;font-size:8.4px;color:#555;-webkit-text-stroke:0">Q1</div>
<div class="t " style="left:1306.49px;top:532.29px;font-size:8.4px;color:#555;-webkit-text-stroke:0">Q2</div>
<div class="t " style="left:1351.59px;top:532.29px;font-size:8.4px;color:#555;-webkit-text-stroke:0">Q3</div>
<div class="t " style="left:1396.69px;top:532.29px;font-size:8.4px;color:#555;-webkit-text-stroke:0">Q4</div>
<div class="t " style="left:1441.79px;top:532.29px;font-size:8.4px;color:#555;-webkit-text-stroke:0">Q1</div>
<div class="t " style="left:1486.89px;top:532.29px;font-size:8.4px;color:#555;-webkit-text-stroke:0">Q2</div>
<div class="t " style="left:1531.99px;top:532.29px;font-size:8.4px;color:#555;-webkit-text-stroke:0">Q3</div>
<div class="t " style="left:1577.09px;top:532.29px;font-size:8.4px;color:#555;-webkit-text-stroke:0">Q4</div>
<div class="t " style="left:1622.19px;top:532.29px;font-size:8.4px;color:#555;-webkit-text-stroke:0">Q1</div>
<div class="t " style="left:1667.29px;top:532.29px;font-size:8.4px;color:#555;-webkit-text-stroke:0">Q2</div>
<div class="t " style="left:1712.39px;top:532.29px;font-size:8.4px;color:#555;-webkit-text-stroke:0">Q3</div>
<div class="a" style="left:1014.0px;top:540px;width:3.9px;height:18px;overflow:hidden"><div class="t" style="left:-0.5px;top:7.25px;font-size:8.8px;color:#444">9</div></div>
<div class="t" style="left:1018.50px;top:547.25px;width:15.03px;text-align:center;font-size:8.8px;color:#444;transform:none;-webkit-text-stroke:0">10</div>
<div class="t" style="left:1033.53px;top:547.25px;width:15.03px;text-align:center;font-size:8.8px;color:#444;transform:none;-webkit-text-stroke:0">11</div>
<div class="t" style="left:1048.57px;top:547.25px;width:15.03px;text-align:center;font-size:8.8px;color:#444;transform:none;-webkit-text-stroke:0">12</div>
<div class="t" style="left:1063.60px;top:547.25px;width:15.03px;text-align:center;font-size:8.8px;color:#444;transform:none;-webkit-text-stroke:0">1</div>
<div class="t" style="left:1078.63px;top:547.25px;width:15.03px;text-align:center;font-size:8.8px;color:#444;transform:none;-webkit-text-stroke:0">2</div>
<div class="t" style="left:1093.67px;top:547.25px;width:15.03px;text-align:center;font-size:8.8px;color:#444;transform:none;-webkit-text-stroke:0">3</div>
<div class="t" style="left:1108.70px;top:547.25px;width:15.03px;text-align:center;font-size:8.8px;color:#444;transform:none;-webkit-text-stroke:0">4</div>
<div class="t" style="left:1123.73px;top:547.25px;width:15.03px;text-align:center;font-size:8.8px;color:#444;transform:none;-webkit-text-stroke:0">5</div>
<div class="t" style="left:1138.76px;top:547.25px;width:15.03px;text-align:center;font-size:8.8px;color:#444;transform:none;-webkit-text-stroke:0">6</div>
<div class="t" style="left:1153.80px;top:547.25px;width:15.03px;text-align:center;font-size:8.8px;color:#444;transform:none;-webkit-text-stroke:0">7</div>
<div class="t" style="left:1168.83px;top:547.25px;width:15.03px;text-align:center;font-size:8.8px;color:#444;transform:none;-webkit-text-stroke:0">8</div>
<div class="t" style="left:1183.86px;top:547.25px;width:15.03px;text-align:center;font-size:8.8px;color:#444;transform:none;-webkit-text-stroke:0">9</div>
<div class="t" style="left:1198.90px;top:547.25px;width:15.03px;text-align:center;font-size:8.8px;color:#444;transform:none;-webkit-text-stroke:0">10</div>
<div class="t" style="left:1213.93px;top:547.25px;width:15.03px;text-align:center;font-size:8.8px;color:#444;transform:none;-webkit-text-stroke:0">11</div>
<div class="t" style="left:1228.96px;top:547.25px;width:15.03px;text-align:center;font-size:8.8px;color:#444;transform:none;-webkit-text-stroke:0">12</div>
<div class="t" style="left:1244.00px;top:547.25px;width:15.03px;text-align:center;font-size:8.8px;color:#444;transform:none;-webkit-text-stroke:0">1</div>
<div class="t" style="left:1259.03px;top:547.25px;width:15.03px;text-align:center;font-size:8.8px;color:#444;transform:none;-webkit-text-stroke:0">2</div>
<div class="t" style="left:1274.06px;top:547.25px;width:15.03px;text-align:center;font-size:8.8px;color:#444;transform:none;-webkit-text-stroke:0">3</div>
<div class="t" style="left:1289.09px;top:547.25px;width:15.03px;text-align:center;font-size:8.8px;color:#444;transform:none;-webkit-text-stroke:0">4</div>
<div class="t" style="left:1304.13px;top:547.25px;width:15.03px;text-align:center;font-size:8.8px;color:#444;transform:none;-webkit-text-stroke:0">5</div>
<div class="t" style="left:1319.16px;top:547.25px;width:15.03px;text-align:center;font-size:8.8px;color:#444;transform:none;-webkit-text-stroke:0">6</div>
<div class="t" style="left:1334.19px;top:547.25px;width:15.03px;text-align:center;font-size:8.8px;color:#444;transform:none;-webkit-text-stroke:0">7</div>
<div class="t" style="left:1349.23px;top:547.25px;width:15.03px;text-align:center;font-size:8.8px;color:#444;transform:none;-webkit-text-stroke:0">8</div>
<div class="t" style="left:1364.26px;top:547.25px;width:15.03px;text-align:center;font-size:8.8px;color:#444;transform:none;-webkit-text-stroke:0">9</div>
<div class="t" style="left:1379.29px;top:547.25px;width:15.03px;text-align:center;font-size:8.8px;color:#444;transform:none;-webkit-text-stroke:0">10</div>
<div class="t" style="left:1394.33px;top:547.25px;width:15.03px;text-align:center;font-size:8.8px;color:#444;transform:none;-webkit-text-stroke:0">11</div>
<div class="t" style="left:1409.36px;top:547.25px;width:15.03px;text-align:center;font-size:8.8px;color:#444;transform:none;-webkit-text-stroke:0">12</div>
<div class="t" style="left:1424.39px;top:547.25px;width:15.03px;text-align:center;font-size:8.8px;color:#444;transform:none;-webkit-text-stroke:0">1</div>
<div class="t" style="left:1439.42px;top:547.25px;width:15.03px;text-align:center;font-size:8.8px;color:#444;transform:none;-webkit-text-stroke:0">2</div>
<div class="t" style="left:1454.46px;top:547.25px;width:15.03px;text-align:center;font-size:8.8px;color:#444;transform:none;-webkit-text-stroke:0">3</div>
<div class="t" style="left:1469.49px;top:547.25px;width:15.03px;text-align:center;font-size:8.8px;color:#444;transform:none;-webkit-text-stroke:0">4</div>
<div class="t" style="left:1484.52px;top:547.25px;width:15.03px;text-align:center;font-size:8.8px;color:#444;transform:none;-webkit-text-stroke:0">5</div>
<div class="t" style="left:1499.56px;top:547.25px;width:15.03px;text-align:center;font-size:8.8px;color:#444;transform:none;-webkit-text-stroke:0">6</div>
<div class="t" style="left:1514.59px;top:547.25px;width:15.03px;text-align:center;font-size:8.8px;color:#444;transform:none;-webkit-text-stroke:0">7</div>
<div class="t" style="left:1529.62px;top:547.25px;width:15.03px;text-align:center;font-size:8.8px;color:#444;transform:none;-webkit-text-stroke:0">8</div>
<div class="t" style="left:1544.66px;top:547.25px;width:15.03px;text-align:center;font-size:8.8px;color:#444;transform:none;-webkit-text-stroke:0">9</div>
<div class="t" style="left:1559.69px;top:547.25px;width:15.03px;text-align:center;font-size:8.8px;color:#444;transform:none;-webkit-text-stroke:0">10</div>
<div class="t" style="left:1574.72px;top:547.25px;width:15.03px;text-align:center;font-size:8.8px;color:#444;transform:none;-webkit-text-stroke:0">11</div>
<div class="t" style="left:1589.75px;top:547.25px;width:15.03px;text-align:center;font-size:8.8px;color:#444;transform:none;-webkit-text-stroke:0">12</div>
<div class="t" style="left:1604.79px;top:547.25px;width:15.03px;text-align:center;font-size:8.8px;color:#444;transform:none;-webkit-text-stroke:0">1</div>
<div class="t" style="left:1619.82px;top:547.25px;width:15.03px;text-align:center;font-size:8.8px;color:#444;transform:none;-webkit-text-stroke:0">2</div>
<div class="t" style="left:1634.85px;top:547.25px;width:15.03px;text-align:center;font-size:8.8px;color:#444;transform:none;-webkit-text-stroke:0">3</div>
<div class="t" style="left:1649.89px;top:547.25px;width:15.03px;text-align:center;font-size:8.8px;color:#444;transform:none;-webkit-text-stroke:0">4</div>
<div class="t" style="left:1664.92px;top:547.25px;width:15.03px;text-align:center;font-size:8.8px;color:#444;transform:none;-webkit-text-stroke:0">5</div>
<div class="t" style="left:1679.95px;top:547.25px;width:15.03px;text-align:center;font-size:8.8px;color:#444;transform:none;-webkit-text-stroke:0">6</div>
<div class="t" style="left:1694.99px;top:547.25px;width:15.03px;text-align:center;font-size:8.8px;color:#444;transform:none;-webkit-text-stroke:0">7</div>
<div class="t" style="left:1710.02px;top:547.25px;width:15.03px;text-align:center;font-size:8.8px;color:#444;transform:none;-webkit-text-stroke:0">8</div>
<div class="t" style="left:1725.05px;top:547.25px;width:15.03px;text-align:center;font-size:8.8px;color:#444;transform:none;-webkit-text-stroke:0">9</div>
<div class="t " style="left: 1155px; top: 572.05px; font-size: 15.3px; color: rgb(51, 51, 51); transform: scaleX(0.8693);"><i>Go-Live v1.0</i></div>
<div class="t " style="left: 1159.8px; top: 612.55px; font-size: 15.3px; color: rgb(51, 51, 51); transform: scaleX(0.8624);"><i>Go-Live v1.1</i></div>
<div class="t " style="left: 289px; top: 755.51px; font-size: 17px; color: rgb(85, 85, 85); letter-spacing: 1.6px; -webkit-text-stroke: 0.65px rgb(85, 85, 85); transform: scaleX(0.8653);">WORK PACKAGES</div>
<div class="a" style="left:282.2px;top:793.7px;width:699.2px;height:33.3px;border:2px solid #d0d0d0;background:#fff"></div>
<div class="t " style="left: 290px; top: 803.55px; font-size: 14px; color: rgb(17, 17, 17); transform: scaleX(0.9717);">Type</div>
<svg style="left:961px;top:805px" width="10" height="8"><path d="M0.5 0.8H9.5L5 7.2Z" fill="#111"></path></svg>
<div class="a" style="left:551.2px;top:856.9px;width:39px;height:11px;background:#fca4b8;"></div>
<div class="t " style="left: 596.5px; top: 855.97px; font-size: 12.2px; color: rgb(102, 102, 102); -webkit-text-stroke: 0px; transform: scaleX(0.9475);">open</div>
<div class="a" style="left:633.4px;top:856.9px;width:39px;height:11px;background:#82c6f0;"></div>
<div class="t " style="left: 677.9px; top: 855.97px; font-size: 12.2px; color: rgb(102, 102, 102); -webkit-text-stroke: 0px; transform: scaleX(1.0019);">closed</div>
<svg style="left:0;top:0" width="1804" height="1125"><rect x="348.90" y="878" width="1" height="224.6" fill="#e2e2e2"></rect><rect x="438.36" y="878" width="1" height="224.6" fill="#e2e2e2"></rect><rect x="527.81" y="878" width="1" height="224.6" fill="#e2e2e2"></rect><rect x="617.27" y="878" width="1" height="224.6" fill="#e2e2e2"></rect><rect x="706.73" y="878" width="1" height="224.6" fill="#e2e2e2"></rect><rect x="796.19" y="878" width="1" height="224.6" fill="#e2e2e2"></rect><rect x="885.64" y="878" width="1" height="224.6" fill="#e2e2e2"></rect><rect x="975.10" y="878" width="1" height="224.6" fill="#e2e2e2"></rect><rect x="339.5" y="877.8" width="636.1" height="1" fill="#c9c9c9"></rect><rect x="339.5" y="920.8" width="636.1" height="1" fill="#e4e4e4"></rect><rect x="339.5" y="963.9" width="636.1" height="1" fill="#e4e4e4"></rect><rect x="339.5" y="1006.9" width="636.1" height="1" fill="#e4e4e4"></rect><rect x="339.5" y="1050.0" width="636.1" height="1" fill="#e4e4e4"></rect><rect x="339.5" y="1093.0" width="636.1" height="1" fill="#c9c9c9"></rect><rect x="349.40" y="884.30" width="626.20" height="30.6" fill="#fca4b8"></rect><rect x="349.40" y="927.20" width="178.91" height="30.6" fill="#fca4b8"></rect><rect x="528.31" y="927.20" width="89.46" height="30.6" fill="#82c6f0"></rect><rect x="349.40" y="970.30" width="268.37" height="30.6" fill="#fca4b8"></rect><rect x="349.40" y="1013.20" width="268.37" height="30.6" fill="#fca4b8"></rect><rect x="349.40" y="1056.50" width="89.46" height="30.6" fill="#fca4b8"></rect><rect x="438.86" y="1056.50" width="89.46" height="30.6" fill="#82c6f0"></rect><rect x="438.36" y="878" width="1" height="220" fill="rgba(0,0,0,0.05)"></rect><rect x="527.81" y="878" width="1" height="220" fill="rgba(0,0,0,0.05)"></rect><rect x="617.27" y="878" width="1" height="220" fill="rgba(0,0,0,0.05)"></rect><rect x="706.73" y="878" width="1" height="220" fill="rgba(0,0,0,0.05)"></rect><rect x="796.19" y="878" width="1" height="220" fill="rgba(0,0,0,0.05)"></rect><rect x="885.64" y="878" width="1" height="220" fill="rgba(0,0,0,0.05)"></rect><rect x="975.10" y="878" width="1" height="220" fill="rgba(0,0,0,0.05)"></rect><rect x="348.80" y="878" width="1.2" height="224.6" fill="#c4c4c4"></rect></svg>
<div class="t" style="left:238.9px;top:894.47px;width:100px;text-align:right;font-size:12.2px;color:#666;transform:none;-webkit-text-stroke:0">Task</div>
<div class="t" style="left:652.50px;top:893.67px;width:20px;text-align:center;font-size:12.2px;color:#666;transform:none;-webkit-text-stroke:0">7</div>
<div class="t" style="left:965.60px;top:893.67px;width:20px;text-align:center;font-size:12.2px;color:#666;transform:none;-webkit-text-stroke:0">0</div>
<div class="t" style="left:238.9px;top:937.37px;width:100px;text-align:right;font-size:12.2px;color:#666;transform:none;-webkit-text-stroke:0">Milestone</div>
<div class="t" style="left:428.86px;top:936.57px;width:20px;text-align:center;font-size:12.2px;color:#666;transform:none;-webkit-text-stroke:0">2</div>
<div class="t" style="left:563.04px;top:936.57px;width:20px;text-align:center;font-size:12.2px;color:#666;transform:none;-webkit-text-stroke:0">1</div>
<div class="t" style="left:238.9px;top:980.47px;width:100px;text-align:right;font-size:12.2px;color:#666;transform:none;-webkit-text-stroke:0">Phase</div>
<div class="t" style="left:473.59px;top:979.67px;width:20px;text-align:center;font-size:12.2px;color:#666;transform:none;-webkit-text-stroke:0">3</div>
<div class="t" style="left:607.77px;top:979.67px;width:20px;text-align:center;font-size:12.2px;color:#666;transform:none;-webkit-text-stroke:0">0</div>
<div class="t" style="left:238.9px;top:1023.37px;width:100px;text-align:right;font-size:12.2px;color:#666;transform:none;-webkit-text-stroke:0">Feature</div>
<div class="t" style="left:473.59px;top:1022.57px;width:20px;text-align:center;font-size:12.2px;color:#666;transform:none;-webkit-text-stroke:0">3</div>
<div class="t" style="left:607.77px;top:1022.57px;width:20px;text-align:center;font-size:12.2px;color:#666;transform:none;-webkit-text-stroke:0">0</div>
<div class="t" style="left:238.9px;top:1066.67px;width:100px;text-align:right;font-size:12.2px;color:#666;transform:none;-webkit-text-stroke:0">Bug</div>
<div class="t" style="left:384.13px;top:1065.87px;width:20px;text-align:center;font-size:12.2px;color:#666;transform:none;-webkit-text-stroke:0">1</div>
<div class="t" style="left:473.59px;top:1065.87px;width:20px;text-align:center;font-size:12.2px;color:#666;transform:none;-webkit-text-stroke:0">1</div>
<div class="t" style="left:339.40px;top:1104.87px;width:20px;text-align:center;font-size:12.2px;color:#666;transform:none;-webkit-text-stroke:0">0</div>
<div class="t" style="left:428.86px;top:1104.87px;width:20px;text-align:center;font-size:12.2px;color:#666;transform:none;-webkit-text-stroke:0">1</div>
<div class="t" style="left:518.31px;top:1104.87px;width:20px;text-align:center;font-size:12.2px;color:#666;transform:none;-webkit-text-stroke:0">2</div>
<div class="t" style="left:607.77px;top:1104.87px;width:20px;text-align:center;font-size:12.2px;color:#666;transform:none;-webkit-text-stroke:0">3</div>
<div class="t" style="left:697.23px;top:1104.87px;width:20px;text-align:center;font-size:12.2px;color:#666;transform:none;-webkit-text-stroke:0">4</div>
<div class="t" style="left:786.69px;top:1104.87px;width:20px;text-align:center;font-size:12.2px;color:#666;transform:none;-webkit-text-stroke:0">5</div>
<div class="t" style="left:876.14px;top:1104.87px;width:20px;text-align:center;font-size:12.2px;color:#666;transform:none;-webkit-text-stroke:0">6</div>
<div class="t" style="left:965.60px;top:1104.87px;width:20px;text-align:center;font-size:12.2px;color:#666;transform:none;-webkit-text-stroke:0">7</div>
<div class="t " style="left: 1047.4px; top: 756.21px; font-size: 17px; color: rgb(85, 85, 85); letter-spacing: 1.6px; -webkit-text-stroke: 0.65px rgb(85, 85, 85); transform: scaleX(0.8637);">WORK PACKAGES STATUS</div>
<svg style="left:0;top:0" width="1804" height="1125"><path d="M1390.7 958.6L1390.70 794.60A164 164 0 0 1 1542.22 1021.36Z" fill="#fca4b8" stroke="#fff" stroke-width="2"></path><path d="M1390.7 958.6L1542.22 1021.36A164 164 0 0 1 1506.67 1074.57Z" fill="#82c6f0" stroke="#fff" stroke-width="2"></path><path d="M1390.7 958.6L1506.67 1074.57A164 164 0 0 1 1453.46 1110.12Z" fill="#fae3a0" stroke="#fff" stroke-width="2"></path><path d="M1390.7 958.6L1453.46 1110.12A164 164 0 0 1 1390.70 1122.60Z" fill="#f0f1f3" stroke="#fff" stroke-width="2"></path><path d="M1390.7 958.6L1390.70 1122.60A164 164 0 0 1 1226.70 958.60Z" fill="#99d9da" stroke="#fff" stroke-width="2"></path><path d="M1390.7 958.6L1226.70 958.60A164 164 0 0 1 1327.94 807.08Z" fill="#c3d5e0" stroke="#fff" stroke-width="2"></path><path d="M1390.7 958.6L1327.94 807.08A164 164 0 0 1 1390.70 794.60Z" fill="#eaeaea" stroke="#fff" stroke-width="2"></path></svg>
<div class="t" style="left:1448.88px;top:906.92px;width:20px;text-align:center;font-size:12.2px;color:#666;transform:none;-webkit-text-stroke:0">5</div>
<div class="t" style="left:1448.88px;top:998.03px;width:20px;text-align:center;font-size:12.2px;color:#666;transform:none;-webkit-text-stroke:0">1</div>
<div class="t" style="left:1426.26px;top:1020.65px;width:20px;text-align:center;font-size:12.2px;color:#666;transform:none;-webkit-text-stroke:0">1</div>
<div class="t" style="left:1396.70px;top:1032.90px;width:20px;text-align:center;font-size:12.2px;color:#666;transform:none;-webkit-text-stroke:0">1</div>
<div class="t" style="left:1322.72px;top:1010.46px;width:20px;text-align:center;font-size:12.2px;color:#666;transform:none;-webkit-text-stroke:0">4</div>
<div class="t" style="left:1312.52px;top:906.92px;width:20px;text-align:center;font-size:12.2px;color:#666;transform:none;-webkit-text-stroke:0">3</div>
<div class="t" style="left:1364.70px;top:872.05px;width:20px;text-align:center;font-size:12.2px;color:#666;transform:none;-webkit-text-stroke:0">1</div>
<div class="a" style="left:1763.4px;top:933.6px;width:11.5px;height:1.5px;background:#333;"></div>
<div class="a" style="left:1768.4px;top:928.6px;width:1.5px;height:11.5px;background:#333;"></div>
<div class="a" style="left:1764.7px;top:1033.9px;width:45px;height:25.5px;background:#e9e4e6;box-shadow:0 1px 3px rgba(0,0,0,.25)"></div>
<div class="t " style="left: 1773px; top: 1038.81px; font-size: 14.4px; color: rgb(68, 68, 68); transform: scaleX(0.9879);">Add</div>
<div class="a" style="left:247px;top:112px;width:771px;height:339px;border:6px solid #35c53f"></div>
</body></html>
